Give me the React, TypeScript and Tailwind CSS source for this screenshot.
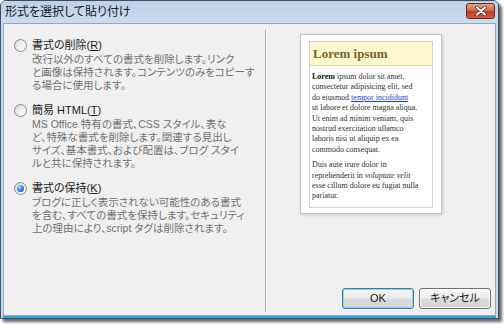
import React from "react";

const ui = "font-['Liberation_Sans','Noto_Sans_CJK_JP',sans-serif] [font-feature-settings:'palt']";

const Radio = ({ checked }: { checked?: boolean }) => (
  <span className="w-[13px] h-[13px] shrink-0 rounded-full border border-[#8b8b8b] bg-gradient-to-br from-[#d9d9d9] to-[#fbfbfb] flex items-center justify-center">
    {checked ? (
      <span className="w-[7px] h-[7px] rounded-full bg-[radial-gradient(circle_at_35%_30%,#b8e2ff_0%,#3b8ae0_45%,#0d3f94_100%)]" />
    ) : (
      <span className="w-[9px] h-[9px] rounded-full bg-gradient-to-br from-[#e2e2e2] to-[#fafafa]" />
    )}
  </span>
);

const Option = ({
  label,
  accel,
  lines,
  checked,
}: {
  label: string;
  accel: string;
  lines: string[];
  checked?: boolean;
}) => (
  <div className="flex flex-col">
    <div className="flex items-center gap-[5px] h-[14px]">
      <Radio checked={checked} />
      <span className="text-[11px] leading-[14px] text-[#1b1b1b] whitespace-nowrap">
        {label}(<span className="underline">{accel}</span>)
      </span>
    </div>
    <div className="pl-[18px] pt-[1px] text-[10.5px] leading-[13px] text-[#707070]">
      {lines.map((l) => (
        <div key={l} className="whitespace-nowrap">
          {l}
        </div>
      ))}
    </div>
  </div>
);

const Preview = () => (
  <div className="w-[142px] h-[180px] bg-white border border-[#c4c4c4] shadow-[1px_1px_3px_rgba(0,0,0,0.15)] px-[8px] pt-[6px]">
    <div className="h-[167px] border border-[#d0d0d0] font-['Liberation_Serif',serif]">
      <div className="h-[24px] bg-[#fcf7cd] border-b border-[#e4dca6] flex items-center px-[3px] text-[13px] font-bold text-[#79642a]">
        Lorem ipsum
      </div>
      <div className="px-[2px] pt-[6px] text-[8px] leading-[10.4px] text-[#303030] whitespace-nowrap">
        <div>
          <b className="text-[#111111]">Lorem</b> ipsum dolor sit amet,
        </div>
        <div>consectetur adipisicing elit, sed</div>
        <div>
          do eiusmod <span className="text-[#1a3fd0] underline">tempor incididunt</span>
        </div>
        <div>ut labore et dolore magna aliqua.</div>
        <div>Ut enim ad minim veniam, quis</div>
        <div>nostrud exercitation ullamco</div>
        <div>laboris nisi ut aliquip ex ea</div>
        <div>commodo consequat.</div>
        <div className="mt-[5px]">Duis aute irure dolor in</div>
        <div>
          reprehenderit in <i>voluptate velit</i>
        </div>
        <div>esse cillum dolore eu fugiat nulla</div>
        <div>pariatur.</div>
      </div>
    </div>
  </div>
);

const Button = ({ children, primary }: { children: React.ReactNode; primary?: boolean }) => (
  <button
    className={`w-[72px] h-[21px] rounded-[3px] border text-[11px] text-[#1b1b1b] bg-[linear-gradient(#f6f6f6_0%,#ebebeb_48%,#dcdcdc_52%,#d3d3d3_100%)] ${
      primary
        ? "border-[#3d7bad] shadow-[inset_0_0_0_1px_#8fd2f2]"
        : "border-[#707070] shadow-[inset_0_0_0_1px_#fbfbfb]"
    }`}
  >
    {children}
  </button>
);

export default function App() {
  return (
    <div className={`w-[504px] h-[324px] bg-white ${ui}`}>
      <div className="w-[499px] h-[319px] flex flex-col rounded-t-[6px] border border-[#3b4e63] bg-[#c7d9ed] shadow-[3px_3px_3px_rgba(0,0,0,0.6)]">
        <div className="h-[22px] shrink-0 flex items-center justify-between pl-[4px] pr-[3px] rounded-t-[5px] bg-gradient-to-b from-[#bcd1e9] to-[#cbdcef]">
          <span className="text-[12px] text-[#1a1a1a] whitespace-nowrap">形式を選択して貼り付け</span>
          <span className="w-[29px] h-[16px] -mt-[3px] rounded-[3px] border border-[#6a2b1e] bg-[linear-gradient(#e8a089_0%,#d46a4f_45%,#c03b20_55%,#d0603f_100%)] flex items-center justify-center">
            <svg width="12" height="10" viewBox="0 0 12 10">
              <path d="M2 1.5 L10 8.5 M10 1.5 L2 8.5" stroke="#5a2416" strokeWidth="3.6" strokeLinecap="round" />
              <path d="M2 1.5 L10 8.5 M10 1.5 L2 8.5" stroke="#ffffff" strokeWidth="2.2" strokeLinecap="round" />
            </svg>
          </span>
        </div>
        <div className="flex-1 flex flex-col px-[2px]">
          <div className="flex-1 flex bg-[#f0f0f0] border border-[#93a7bd]">
            <div className="w-[261px] shrink-0 pl-[10px] pt-[14px] flex flex-col gap-[11px]">
              <Option
                label="書式の削除"
                accel="R"
                lines={[
                  "改行以外のすべての書式を削除します。リンク",
                  "と画像は保持されます。コンテンツのみをコピーす",
                  "る場合に使用します。",
                ]}
              />
              <Option
                label="簡易 HTML"
                accel="T"
                lines={[
                  "MS Office 特有の書式、CSS スタイル、表な",
                  "ど、特殊な書式を削除します。関連する見出し",
                  "サイズ、基本書式、および配置は、ブログ スタイ",
                  "ルと共に保持されます。",
                ]}
              />
              <Option
                label="書式の保持"
                accel="K"
                checked
                lines={[
                  "ブログに正しく表示されない可能性のある書式",
                  "を含む、すべての書式を保持します。セキュリティ",
                  "上の理由により、script タグは削除されます。",
                ]}
              />
            </div>
            <div className="w-[2px] shrink-0 mt-[6px] mb-[3px] border-l border-[#a9a9a9] bg-white" />
            <div className="flex-1 flex flex-col pl-[33px] pt-[10px] pr-[4px] pb-[6px]">
              <Preview />
              <div className="flex-1" />
              <div className="flex justify-end gap-[5px]">
                <Button primary>OK</Button>
                <Button>キャンセル</Button>
              </div>
            </div>
          </div>
          <div className="h-[2px] shrink-0 bg-[#2fa6df]" />
        </div>
      </div>
    </div>
  );
}
